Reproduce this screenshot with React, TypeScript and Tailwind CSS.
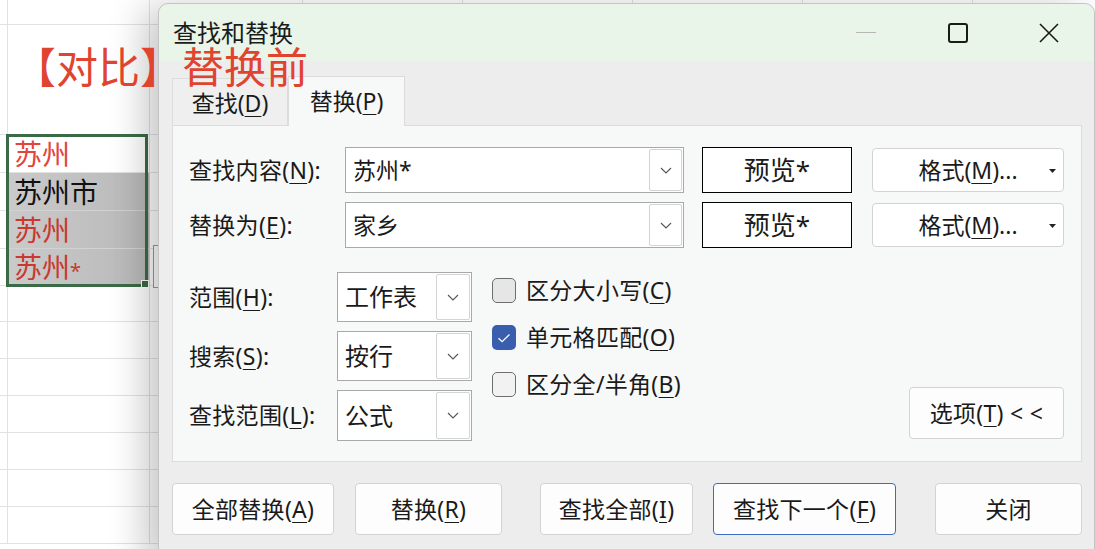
import React from 'react';

const rowHeights = ['h-[25px]', 'h-[110px]', 'h-[38px]', 'h-[38px]', 'h-[38px]', 'h-[37px]', 'h-[36px]', 'h-[37px]', 'h-[37px]', 'h-[37px]', 'h-[37px]', 'h-[37px]', 'h-[37px]'];
const colWidths = ['w-[8px]', 'w-[142px]', 'w-[153px]', 'w-[160px]', 'w-[170px]', 'w-[170px]', 'w-[170px]', 'w-[170px]'];

const cells: Record<string, { text: React.ReactNode; color: string; gray: boolean }> = {
    '2-1': { text: '苏州', color: 'text-[#e2453a]', gray: false },
    '3-1': { text: '苏州市', color: 'text-[#111111]', gray: true },
    '4-1': { text: '苏州', color: 'text-[#c8392f]', gray: true },
    '5-1': { text: <>苏州<span className="text-[20px]">*</span></>, color: 'text-[#c8392f]', gray: true },
};

const Sheet: React.FC = () => {
    return (
        <div className="flex flex-col">
            {rowHeights.map((h, r) => (
                <div key={r} className={`flex ${h}`}>
                    {colWidths.map((w, c) => {
                        const cell = cells[`${r}-${c}`];
                        if (r === 1 && c === 1) {
                            return (
                                <div key={c} className={`${w} shrink-0 border-r border-b border-[#e2e2e2] pl-[6px] pt-[21px]`}>
                                    <span className="relative z-20 whitespace-nowrap text-[42px] leading-none text-[#e0442f]">【对比】替换前</span>
                                </div>
                            );
                        }
                        return (
                            <div
                                key={c}
                                className={`${w} shrink-0 border-r border-b ${cell?.gray ? 'border-[#d2d2d2] bg-gradient-to-r from-[#cacaca] to-[#b9b9b9]' : 'border-[#e2e2e2]'} flex items-center pl-[6px]`}
                            >
                                {cell && <span className={`text-[28px] leading-none ${cell.color}`}>{cell.text}</span>}
                            </div>
                        );
                    })}
                </div>
            ))}
        </div>
    );
};

const Chevron = () => (
    <svg width="12" height="7" viewBox="0 0 12 7" fill="none">
        <path d="M1 1l5 5 5-5" stroke="#555" strokeWidth="1.1" />
    </svg>
);

const U: React.FC<{ children: React.ReactNode }> = ({ children }) => (
    <span className="underline decoration-1 underline-offset-[4px]">{children}</span>
);

interface ComboProps {
    text: string;
    className: string;
    dropW: string;
    textSize: string;
}

const Combo: React.FC<ComboProps> = ({ text, className, dropW, textSize }) => (
    <div className={`flex shrink-0 border border-[#a9a9a9] bg-white ${className}`}>
        <div className={`flex flex-1 items-center pl-[7px] leading-none ${textSize}`}>{text}</div>
        <div className={`m-px flex ${dropW} items-center justify-center rounded-[2px] border border-[#d4d4d4] bg-white`}>
            <Chevron />
        </div>
    </div>
);

const Preview = () => (
    <div className="ml-[18px] flex h-[46px] w-[150px] shrink-0 items-center justify-center border border-black bg-white text-[26px] leading-none">
        预览*
    </div>
);

const FormatBtn = () => (
    <div className="relative ml-[20px] flex h-[44px] w-[192px] shrink-0 items-center justify-center rounded-[4px] border border-[#d3d3d3] bg-white text-[23px] leading-none">
        格式(<U>M</U>)...
        <svg className="absolute right-[7px] top-[20px]" width="7" height="4" viewBox="0 0 7 4">
            <path d="M0 0h7L3.5 4z" fill="#222" />
        </svg>
    </div>
);

interface CheckProps {
    checked?: boolean;
    bg?: string;
    children: React.ReactNode;
}

const Check: React.FC<CheckProps> = ({ checked = false, bg = 'bg-[#f2f2f2]', children }) => (
    <div className="flex h-[25px] items-center">
        {checked ? (
            <div className="flex h-[25px] w-[24px] items-center justify-center rounded-[5px] bg-[#3a5eae]">
                <svg width="14" height="10" viewBox="0 0 14 10" fill="none">
                    <path d="M1.5 5.2l3.6 3.4L12.5 1.5" stroke="white" strokeWidth="1.3" />
                </svg>
            </div>
        ) : (
            <div className={`h-[25px] w-[24px] rounded-[5px] border-[1.5px] border-[#6e6e6e] ${bg}`} />
        )}
        <span className="ml-[10px] text-[23px] leading-none tracking-[0.3px]">{children}</span>
    </div>
);

const Btn: React.FC<{ className: string; children: React.ReactNode }> = ({ className, children }) => (
    <div className={`flex h-[52px] shrink-0 items-center justify-center rounded-[4px] border bg-[#fdfdfd] text-[23px] leading-none tracking-[0.3px] ${className}`}>
        {children}
    </div>
);

const Label: React.FC<{ className: string; children: React.ReactNode }> = ({ className, children }) => (
    <div className={`shrink-0 text-[23px] leading-none tracking-[0.3px] ${className}`}>{children}</div>
);

const Dialog: React.FC = () => {
    return (
        <div className="absolute left-[158px] top-[3px] z-10 h-[560px] w-[937px] rounded-t-[10px] border border-[#c4c4c4] bg-[#ededed] shadow-[-14px_4px_36px_rgba(0,0,0,0.22)]">
            <div className="flex h-[57px] items-center rounded-t-[10px] bg-[#e8f5e8]">
                <span className="pl-[14px] text-[24px] leading-none text-[#1b1b1b]">查找和替换</span>
                <div className="ml-auto flex h-full">
                    <div className="flex w-[92px] items-center justify-center">
                        <div className="h-px w-[20px] bg-[#b5b5b5]" />
                    </div>
                    <div className="flex w-[92px] items-center justify-center">
                        <div className="h-[20px] w-[20px] rounded-[3px] border-2 border-[#1a1a1a]" />
                    </div>
                    <div className="flex w-[90px] items-center justify-center">
                        <svg width="20" height="20" viewBox="0 0 20 20">
                            <path d="M1 1l18 18M19 1L1 19" stroke="#1a1a1a" strokeWidth="1.6" />
                        </svg>
                    </div>
                </div>
            </div>

            <div className="px-[13px] pt-[15px] text-[#1a1a1a]">
                <div className="flex h-[49px] items-end">
                    <div className="flex h-[47px] w-[116px] items-center justify-center border border-b-0 border-[#dcdcdc] bg-[#efefef] pt-[2px] text-[23px] leading-none">
                        查找(<U>D</U>)
                    </div>
                    <div className="relative z-[1] -mb-px flex h-[50px] w-[117px] items-center justify-center border border-b-0 border-[#dcdcdc] bg-[#f7f8f8] text-[23px] leading-none">
                        替换(<U>P</U>)
                    </div>
                </div>

                <div className="flex h-[337px] w-[910px] flex-col border border-[#dcdcdc] bg-[#f7f8f8] pl-[16px] pr-[17px] pt-[21px]">
                    <div className="flex flex-col gap-[9px]">
                        <div className="flex h-[46px] items-center">
                            <Label className="w-[156px]">查找内容(<U>N</U>):</Label>
                            <Combo text="苏州*" className="h-[46px] w-[339px]" dropW="w-[33px]" textSize="text-[23px]" />
                            <Preview />
                            <FormatBtn />
                        </div>
                        <div className="flex h-[46px] items-center">
                            <Label className="w-[156px]">替换为(<U>E</U>):</Label>
                            <Combo text="家乡" className="h-[46px] w-[339px]" dropW="w-[33px]" textSize="text-[23px]" />
                            <Preview />
                            <FormatBtn />
                        </div>
                    </div>

                    <div className="mt-[24px] flex">
                        <div className="flex flex-col gap-[9px]">
                            <div className="flex h-[50px] items-center">
                                <Label className="w-[148px]">范围(<U>H</U>):</Label>
                                <Combo text="工作表" className="h-[50px] w-[135px]" dropW="w-[34px]" textSize="text-[24px]" />
                            </div>
                            <div className="flex h-[50px] items-center">
                                <Label className="w-[148px]">搜索(<U>S</U>):</Label>
                                <Combo text="按行" className="h-[50px] w-[135px]" dropW="w-[34px]" textSize="text-[24px]" />
                            </div>
                            <div className="flex h-[51px] items-center">
                                <Label className="w-[148px]">查找范围(<U>L</U>):</Label>
                                <Combo text="公式" className="h-[51px] w-[135px]" dropW="w-[34px]" textSize="text-[24px]" />
                            </div>
                        </div>

                        <div className="ml-[20px] flex flex-col gap-[22px] pt-[6px]">
                            <Check bg="bg-[#e6e6e6]">区分大小写(<U>C</U>)</Check>
                            <Check checked>单元格匹配(<U>O</U>)</Check>
                            <Check>区分全/半角(<U>B</U>)</Check>
                        </div>

                        <div className="mb-[2px] ml-auto self-end">
                            <Btn className="w-[155px] border-[#d3d3d3]">
                                选项(<U>T</U>)&nbsp;&lt;&nbsp;&lt;
                            </Btn>
                        </div>
                    </div>
                </div>

                <div className="mt-[21px] flex">
                    <Btn className="w-[162px] border-[#d3d3d3]">全部替换(<U>A</U>)</Btn>
                    <Btn className="ml-[21px] w-[147px] border-[#d3d3d3]">替换(<U>R</U>)</Btn>
                    <Btn className="ml-[38px] w-[153px] border-[#d3d3d3]">查找全部(<U>I</U>)</Btn>
                    <Btn className="ml-[20px] w-[183px] border-[#3c6dc2]">查找下一个(<U>F</U>)</Btn>
                    <Btn className="ml-[39px] w-[147px] border-[#d3d3d3]">关闭</Btn>
                </div>
            </div>
        </div>
    );
};

export default function App() {
    return (
        <div className="relative h-[549px] w-[1095px] overflow-hidden bg-white font-['Noto_Sans','Noto_Sans_CJK_SC',sans-serif]">
            <Sheet />
            <div className="absolute left-[6px] top-[134px] h-[153px] w-[142px] border-[3px] border-[#3b6b46]">
                <div className="absolute -bottom-[4px] -right-[4px] h-[8px] w-[8px] border border-white bg-[#3b6b46]" />
            </div>
            <div className="absolute left-[153px] top-[245px] h-[43px] w-[12px] border border-[#9a9a9a] bg-white" />
            <Dialog />
        </div>
    );
}
